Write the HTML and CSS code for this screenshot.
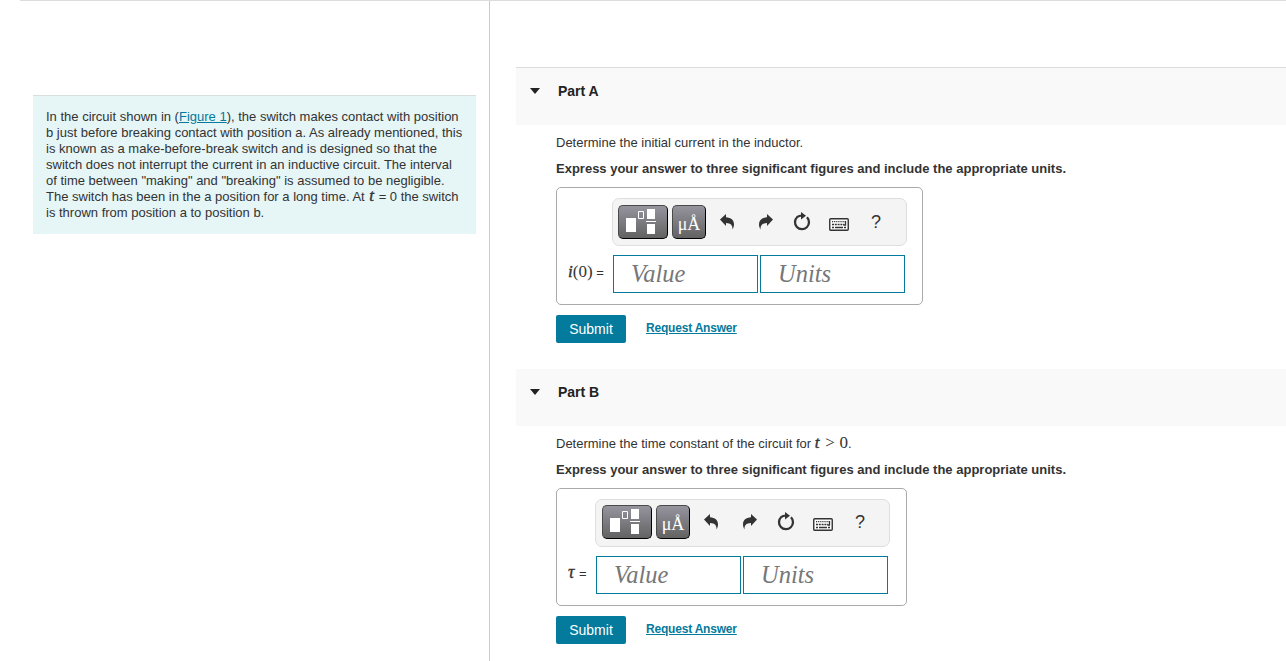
FILE: index.html
```html
<!DOCTYPE html>
<html lang="en">
<head>
<meta charset="utf-8">
<title>Inductive circuit</title>
<link rel="stylesheet" href="styles.css">
</head>
<body>
<svg class="defs" width="0" height="0" aria-hidden="true">
  <symbol id="templates" viewBox="0 0 32 26"><path fill="#fff" d="M0 9h10v14H0zM21 0h8v10h-8zM20 12h10v1H20zM21 15h8v10h-8z"/><path fill="none" stroke="#fff" d="M12.500 2.500h5v7h-5z"/></symbol>
  <symbol id="undo" viewBox="0 0 14 16"><path fill="#333" d="M0 5.500 6 0v3.300c5 .3 8 3 8 7 0 2-.6 3.700-1.500 5.200.2-4.200-1.500-6.300-6.500-6.500v3z"/></symbol>
  <symbol id="reset" viewBox="0 0 18 20"><path fill="none" stroke="#333" stroke-width="2.300" d="M4.300 5A7 7 0 1 0 14 5.300"/><path fill="none" stroke="#333" stroke-width="2.200" d="M4 5.200Q6 3.600 9 3.500"/><path fill="#333" d="M8 0l5 3.800L8 7.400z"/></symbol>
  <symbol id="keyboard" viewBox="0 0 20 13"><rect x=".75" y=".75" width="18.500" height="11.500" rx="1" fill="#fff" stroke="#333" stroke-width="1.400"/><path fill="none" stroke="#333" stroke-width="1.200" d="M3 3.600h14" stroke-dasharray="1.200 .9"/><path fill="none" stroke="#333" stroke-width="1.300" d="M3 6.500h12" stroke-dasharray="2 .8"/><path fill="none" stroke="#333" stroke-width="1.300" d="M3 9.500h2M6 9.500h8M15 9.500h2M16.500 3v4h-2"/></symbol>
</svg>
<div class="page">
  <aside class="side">
    <div class="intro">In the circuit shown in (<a href="#">Figure 1</a>), the switch makes contact with position<br>b just before breaking contact with position a. As already mentioned, this<br>is known as a make-before-break switch and is designed so that the<br>switch does not interrupt the current in an inductive circuit. The interval<br>of time between "making" and "breaking" is assumed to be negligible.<br>The switch has been in the a position for a long time. At <i class="var">t</i> = 0 the switch<br>is thrown from position a to position b.</div>
  </aside>
  <main class="main">
    <section class="part part-a">
      <header class="part-head"><span class="caret"></span><h2>Part A</h2></header>
      <div class="part-body">
        <p>Determine the initial current in the inductor.</p>
        <p class="instruction">Express your answer to three significant figures and include the appropriate units.</p>
        <div class="answer">
          <div class="toolbar">
            <span class="tool wide"><svg width="32" height="26"><use href="#templates"/></svg></span>
            <span class="tool units">μÅ</span>
            <svg class="undo" width="14" height="16"><use href="#undo"/></svg>
            <svg class="redo" width="14" height="16"><use href="#undo"/></svg>
            <svg class="reset" width="18" height="20"><use href="#reset"/></svg>
            <svg class="keys" width="20" height="13"><use href="#keyboard"/></svg>
            <span class="help">?</span>
          </div>
          <div class="fields">
            <span class="label"><span class="math"><i class="stroked">i</i>(0)</span> =</span>
            <div class="field">Value</div><div class="field">Units</div>
          </div>
        </div>
        <div class="actions"><span class="submit">Submit</span><a href="#">Request Answer</a></div>
      </div>
    </section>
    <section class="part part-b">
      <header class="part-head"><span class="caret"></span><h2>Part B</h2></header>
      <div class="part-body">
        <p>Determine the time constant of the circuit for <span class="math cond"><i class="var">t</i> &gt; 0</span>.</p>
        <p class="instruction">Express your answer to three significant figures and include the appropriate units.</p>
        <div class="answer">
          <div class="toolbar">
            <span class="tool wide"><svg width="32" height="26"><use href="#templates"/></svg></span>
            <span class="tool units">μÅ</span>
            <svg class="undo" width="14" height="16"><use href="#undo"/></svg>
            <svg class="redo" width="14" height="16"><use href="#undo"/></svg>
            <svg class="reset" width="18" height="20"><use href="#reset"/></svg>
            <svg class="keys" width="20" height="13"><use href="#keyboard"/></svg>
            <span class="help">?</span>
          </div>
          <div class="fields">
            <span class="label"><i class="math tau">τ</i> =</span>
            <div class="field">Value</div><div class="field">Units</div>
          </div>
        </div>
        <div class="actions"><span class="submit">Submit</span><a href="#">Request Answer</a></div>
      </div>
    </section>
  </main>
</div>
</body>
</html>
```
FILE: styles.css
```css
* { box-sizing: border-box; }
body { margin: 0; background: #fff; color: #333; font: 13px/16px "Liberation Sans", Arial, sans-serif; overflow: hidden; }
.defs { display: block; height: 0; }
a { color: #047a9c; }
.page { display: flex; height: 661px; margin-left: 20px; border-top: 1px solid #dcdcdc; }
.side { width: 470px; padding: 94px 13px 0; border-right: 1px solid #c4ccd4; }
.intro { width: 443px; height: 139px; padding: 13px 0 0 13px; border-top: 1px solid #d8dddd; background: #e6f5f6; white-space: nowrap; }
.var { margin-right: 1px; font-family: "Liberation Serif", serif; font-size: 17px; line-height: 0; -webkit-text-stroke: 0.4px #333; }
.intro .var { margin: 0 1px; }
.main { flex: 1; padding: 66px 0 0 26px; }
.part-a { height: 302px; }
.part-head { display: flex; align-items: flex-start; height: 57px; background: #f9f9f9; padding: 15px 0 0 14px; }
.part-a .part-head { height: 58px; border-top: 1px solid #dcdcdc; }
.caret { margin-top: 5px; border: solid transparent; border-width: 6px 5.500px 0; border-top-color: #222; }
h2 { margin: 0 0 0 18px; font-size: 14px; line-height: 16px; color: #222; }
.part-body { padding: 10px 0 0 40px; }
p { height: 16px; margin: 0 0 10px; white-space: nowrap; }
.instruction { font-weight: bold; }
.math { font-family: "Liberation Serif", serif; font-size: 17px; line-height: 0; }
.cond { word-spacing: 0.5px; }
.stroked { -webkit-text-stroke: 0.4px #333; }
.tau { font-size: 18px; -webkit-text-stroke: 0.3px #333; margin-right: 1px; }
.answer { width: 367px; height: 118px; padding: 10px 0 0 11px; border: 1px solid #aaa; border-radius: 5px; }
.part-b .answer { width: 351px; }
.toolbar { display: flex; width: 295px; height: 48px; margin-left: 44px; padding: 6px 0 0 5px; border: 1px solid #dedede; border-radius: 7px; background: #f4f4f4; }
.part-b .toolbar { margin-left: 27px; padding: 5px 0 0 6px; }
.tool { display: flex; justify-content: center; height: 34px; border: 1px solid #4a4a4a; border-right-color: #000; border-bottom-color: #000; border-radius: 5px; background: linear-gradient(#96949e, #626262); }
.tool svg { display: block; }
.wide { width: 50px; padding: 3px 2px 0 0; }
.units { width: 34px; margin-left: 4px; padding-top: 4px; color: #fff; font: 18px/28px "Liberation Serif", serif; }
.undo { margin: 9px 0 0 14px; }
.redo { margin: 9px 0 0 25px; transform: scaleX(-1); }
.reset { margin: 7px 0 0 20px; }
.keys { margin: 13px 0 0 18px; }
.help { margin: 8px 0 0 22px; font: 18px/18px "Liberation Sans", sans-serif; }
.fields { display: flex; margin-top: 9px; }
.label { width: 45px; padding-top: 9px; white-space: nowrap; line-height: 18px; }
.part-b .label { width: 28px; }
.field { width: 145px; height: 38px; margin-right: 2px; padding-left: 17px; border: 1px solid #047a9c; color: #777; font: italic 24.500px/36px "Liberation Serif", serif; }
.actions { display: flex; gap: 20px; margin-top: 10px; }
.submit { width: 70px; height: 28px; border-radius: 2px; background: #047a9c; color: #fff; font-size: 14px; line-height: 28px; text-align: center; }
.actions a { margin-top: 5px; font-size: 12px; font-weight: bold; letter-spacing: -0.2px; }
```
